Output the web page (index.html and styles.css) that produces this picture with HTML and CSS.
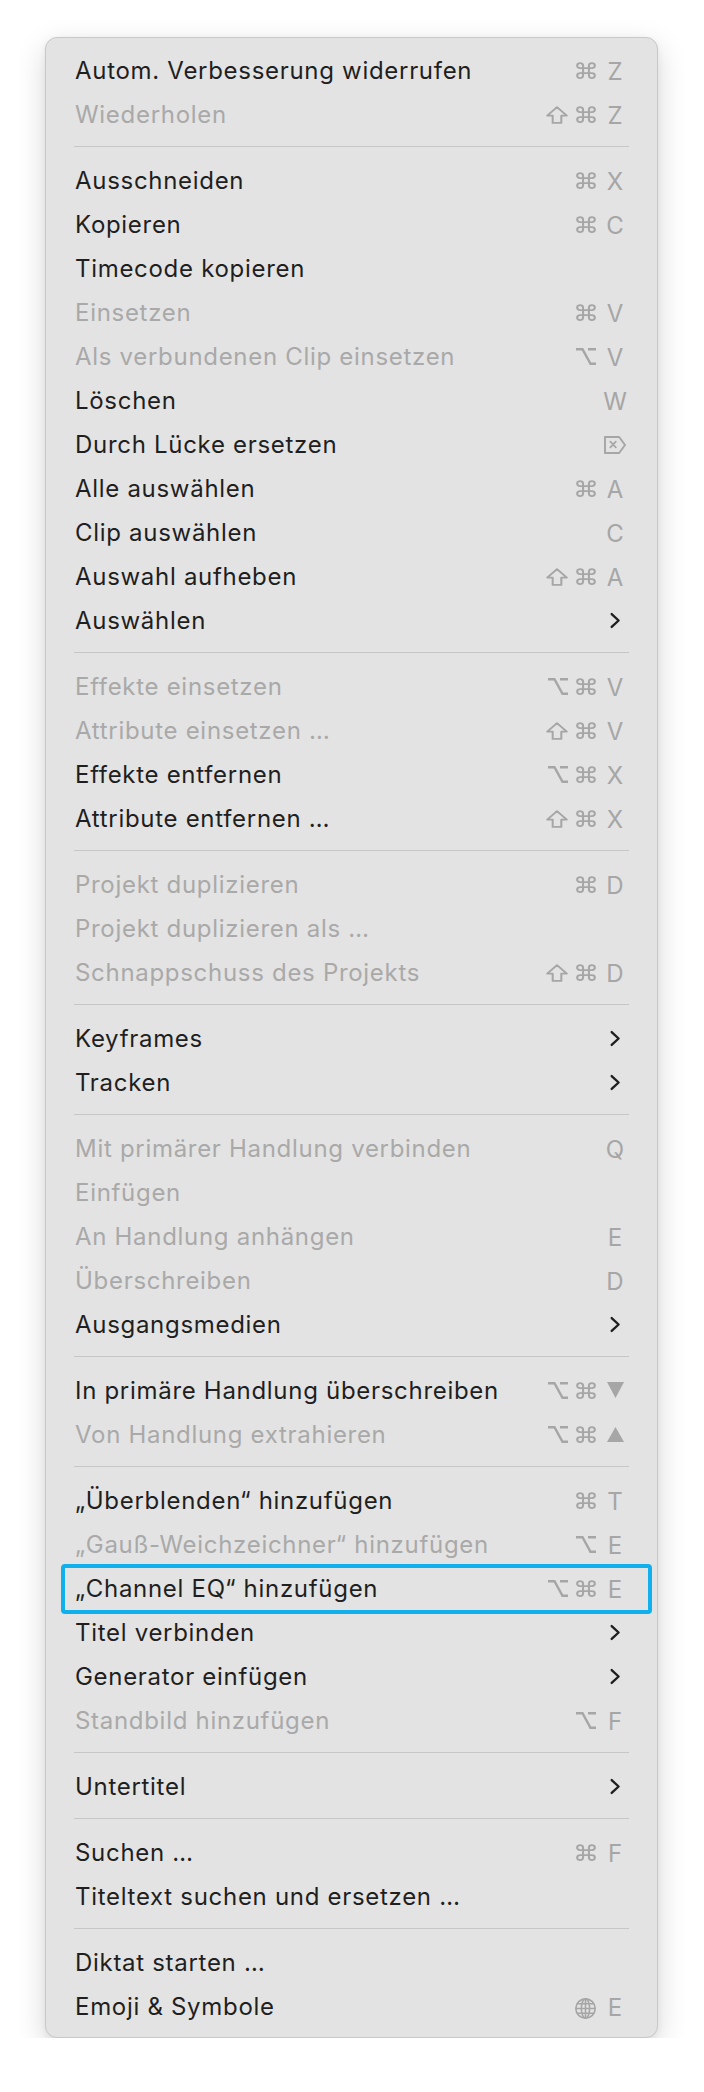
FILE: index.html
```html
<!DOCTYPE html>
<html>
<head>
    <meta charset="UTF-8">
    <link rel="stylesheet" href="styles.css">
</head>
<body>
    <!-- Symbole für Tastenkürzel -->
    <svg class="defs" width="0" height="0">
        <symbol id="cmd" viewBox="1.8 1.8 20.4 20.4" preserveAspectRatio="none"><path d="M15 6v12a3 3 0 1 0 3-3H6a3 3 0 1 0 3 3V6a3 3 0 1 0-3 3h12a3 3 0 1 0-3-3z" fill="none" stroke="currentColor" stroke-width="2.1" stroke-linejoin="round"/></symbol>
        <symbol id="shift" viewBox="1.3 2.3 21.4 19.2" preserveAspectRatio="none"><path d="M12 3.5 21.5 12.5H16.2v7.8H7.8v-7.8H2.5z" fill="none" stroke="currentColor" stroke-width="2" stroke-linejoin="round"/></symbol>
        <symbol id="opt" viewBox="2 3.2 20 17.6" preserveAspectRatio="none"><path d="M2 4.5h6.5l8 15H22M14 4.5h8" fill="none" stroke="currentColor" stroke-width="2.4"/></symbol>
        <symbol id="down" viewBox="2 4 20 17" preserveAspectRatio="none"><path d="M2 4h20L12 21z" fill="currentColor"/></symbol>
        <symbol id="up" viewBox="2 3 20 17" preserveAspectRatio="none"><path d="M12 3 22 20H2z" fill="currentColor"/></symbol>
        <symbol id="delfwd" viewBox="1 1 22.5 18" preserveAspectRatio="none"><path d="M2 2h14.5L22.5 10l-6 8H2z" fill="none" stroke="currentColor" stroke-width="2" stroke-linejoin="round"/><path d="M7.5 6.7l5.6 5.6M13.1 6.7l-5.6 5.6" stroke="currentColor" stroke-width="1.8" stroke-linecap="round"/></symbol>
        <symbol id="globe" viewBox="1 1 22 22"><g fill="none" stroke="currentColor" stroke-width="1.7"><circle cx="12" cy="12" r="10.1"/><ellipse cx="12" cy="12" rx="4.3" ry="10.1"/><path d="M12 1.9v20.2M1.9 12h20.2M3.3 7h17.4M3.3 17h17.4"/></g></symbol>
        <symbol id="chev" viewBox="0 0 12 18"><path d="M2.5 2.2 9.8 9l-7.3 6.8" fill="none" stroke="currentColor" stroke-width="2.5" stroke-linecap="round" stroke-linejoin="round"/></symbol>
    </svg>

    <div class="menu">
        <div class="item"><span class="label">Autom. Verbesserung widerrufen</span><span class="keys"><svg class="mod"><use href="#cmd"/></svg><span class="key">Z</span></span></div>
        <div class="item off"><span class="label">Wiederholen</span><span class="keys"><svg class="mod shift"><use href="#shift"/></svg><svg class="mod"><use href="#cmd"/></svg><span class="key">Z</span></span></div>
        <div class="sep"></div>

        <div class="item"><span class="label">Ausschneiden</span><span class="keys"><svg class="mod"><use href="#cmd"/></svg><span class="key">X</span></span></div>
        <div class="item"><span class="label">Kopieren</span><span class="keys"><svg class="mod"><use href="#cmd"/></svg><span class="key">C</span></span></div>
        <div class="item"><span class="label">Timecode kopieren</span></div>
        <div class="item off"><span class="label">Einsetzen</span><span class="keys"><svg class="mod"><use href="#cmd"/></svg><span class="key">V</span></span></div>
        <div class="item off"><span class="label">Als verbundenen Clip einsetzen</span><span class="keys"><svg class="mod"><use href="#opt"/></svg><span class="key">V</span></span></div>
        <div class="item"><span class="label">Löschen</span><span class="keys"><span class="key">W</span></span></div>
        <div class="item"><span class="label">Durch Lücke ersetzen</span><span class="keys"><span class="key"><svg class="del"><use href="#delfwd"/></svg></span></span></div>
        <div class="item"><span class="label">Alle auswählen</span><span class="keys"><svg class="mod"><use href="#cmd"/></svg><span class="key">A</span></span></div>
        <div class="item"><span class="label">Clip auswählen</span><span class="keys"><span class="key">C</span></span></div>
        <div class="item"><span class="label">Auswahl aufheben</span><span class="keys"><svg class="mod shift"><use href="#shift"/></svg><svg class="mod"><use href="#cmd"/></svg><span class="key">A</span></span></div>
        <div class="item"><span class="label">Auswählen</span><span class="keys"><span class="key"><svg class="chev"><use href="#chev"/></svg></span></span></div>
        <div class="sep"></div>

        <div class="item off"><span class="label">Effekte einsetzen</span><span class="keys"><svg class="mod"><use href="#opt"/></svg><svg class="mod"><use href="#cmd"/></svg><span class="key">V</span></span></div>
        <div class="item off"><span class="label">Attribute einsetzen …</span><span class="keys"><svg class="mod shift"><use href="#shift"/></svg><svg class="mod"><use href="#cmd"/></svg><span class="key">V</span></span></div>
        <div class="item"><span class="label">Effekte entfernen</span><span class="keys"><svg class="mod"><use href="#opt"/></svg><svg class="mod"><use href="#cmd"/></svg><span class="key">X</span></span></div>
        <div class="item"><span class="label">Attribute entfernen …</span><span class="keys"><svg class="mod shift"><use href="#shift"/></svg><svg class="mod"><use href="#cmd"/></svg><span class="key">X</span></span></div>
        <div class="sep"></div>

        <div class="item off"><span class="label">Projekt duplizieren</span><span class="keys"><svg class="mod"><use href="#cmd"/></svg><span class="key">D</span></span></div>
        <div class="item off"><span class="label">Projekt duplizieren als …</span></div>
        <div class="item off"><span class="label">Schnappschuss des Projekts</span><span class="keys"><svg class="mod shift"><use href="#shift"/></svg><svg class="mod"><use href="#cmd"/></svg><span class="key">D</span></span></div>
        <div class="sep"></div>

        <div class="item"><span class="label">Keyframes</span><span class="keys"><span class="key"><svg class="chev"><use href="#chev"/></svg></span></span></div>
        <div class="item"><span class="label">Tracken</span><span class="keys"><span class="key"><svg class="chev"><use href="#chev"/></svg></span></span></div>
        <div class="sep"></div>

        <div class="item off"><span class="label">Mit primärer Handlung verbinden</span><span class="keys"><span class="key">Q</span></span></div>
        <div class="item off"><span class="label">Einfügen</span></div>
        <div class="item off"><span class="label">An Handlung anhängen</span><span class="keys"><span class="key">E</span></span></div>
        <div class="item off"><span class="label">Überschreiben</span><span class="keys"><span class="key">D</span></span></div>
        <div class="item"><span class="label">Ausgangsmedien</span><span class="keys"><span class="key"><svg class="chev"><use href="#chev"/></svg></span></span></div>
        <div class="sep"></div>

        <div class="item"><span class="label">In primäre Handlung überschreiben</span><span class="keys"><svg class="mod"><use href="#opt"/></svg><svg class="mod"><use href="#cmd"/></svg><span class="key"><svg class="tri"><use href="#down"/></svg></span></span></div>
        <div class="item off"><span class="label">Von Handlung extrahieren</span><span class="keys"><svg class="mod"><use href="#opt"/></svg><svg class="mod"><use href="#cmd"/></svg><span class="key"><svg class="tri up"><use href="#up"/></svg></span></span></div>
        <div class="sep"></div>

        <div class="item"><span class="label">„Überblenden“ hinzufügen</span><span class="keys"><svg class="mod"><use href="#cmd"/></svg><span class="key">T</span></span></div>
        <div class="item off"><span class="label">„Gauß-Weichzeichner“ hinzufügen</span><span class="keys"><svg class="mod"><use href="#opt"/></svg><span class="key">E</span></span></div>
        <div class="item focus"><span class="label">„Channel EQ“ hinzufügen</span><span class="keys"><svg class="mod"><use href="#opt"/></svg><svg class="mod"><use href="#cmd"/></svg><span class="key">E</span></span></div>
        <div class="item"><span class="label">Titel verbinden</span><span class="keys"><span class="key"><svg class="chev"><use href="#chev"/></svg></span></span></div>
        <div class="item"><span class="label">Generator einfügen</span><span class="keys"><span class="key"><svg class="chev"><use href="#chev"/></svg></span></span></div>
        <div class="item off"><span class="label">Standbild hinzufügen</span><span class="keys"><svg class="mod"><use href="#opt"/></svg><span class="key">F</span></span></div>
        <div class="sep"></div>

        <div class="item"><span class="label">Untertitel</span><span class="keys"><span class="key"><svg class="chev"><use href="#chev"/></svg></span></span></div>
        <div class="sep"></div>

        <div class="item"><span class="label">Suchen …</span><span class="keys"><svg class="mod"><use href="#cmd"/></svg><span class="key">F</span></span></div>
        <div class="item"><span class="label">Titeltext suchen und ersetzen …</span></div>
        <div class="sep"></div>

        <div class="item"><span class="label">Diktat starten …</span></div>
        <div class="item"><span class="label">Emoji &amp; Symbole</span><span class="keys"><svg class="mod globe"><use href="#globe"/></svg><span class="key">E</span></span></div>
    </div>
</body>
</html>
```

FILE: styles.css
```css
body{margin: 0;padding: 37px 0 0 45px;background: #fff;
    font-family: "Inter", "Liberation Sans", sans-serif;}
.defs{position: absolute;}

.menu{
    width: 613px;box-sizing: border-box;
    padding: 10px 28px 9px 29px;
    background: #e3e3e3;
    border: 1px solid #c8c8c8;border-radius: 12px;
    box-shadow: 0 10px 30px rgba(0,0,0,.16), 0 2px 6px rgba(0,0,0,.06);
}

.item{
    height: 44px;position: relative;
    display: flex;align-items: center;
    font-size: 24px;letter-spacing: .7px;color: #1f1f1f;
}
.item .label{flex: 1;white-space: nowrap;line-height: 44px;padding-top: 2px;}
.item.off{color: #a9a9a9;}

/* Tastenkürzel */
.keys{display: flex;align-items: center;color: #a6a6a6;padding-top: 2px;margin-right: 1px;letter-spacing: 0;}
.mod{width: 20px;height: 17px;margin-left: 8px;margin-top: -1px;}
.mod.shift{width: 22px;height: 18px;}
.key{width: 26px;height: 44px;margin-left: 6px;
    display: flex;align-items: center;justify-content: center;}
.del{width: 22px;height: 18px;}
.tri{width: 17px;height: 16px;margin-top: -3px;}
.tri.up{height: 15px;margin-top: -1px;}
.globe{width: 21px;height: 21px;margin-top: 2px;}
.chev{width: 12px;height: 17px;margin-top: -2px;color: #1f1f1f;}

/* Fokusrahmen */
.item.focus::after{
    content: "";position: absolute;
    left: -14px;right: -23px;top: -2px;bottom: -4px;
    border: 4px solid #0fb0ec;border-radius: 4px;
}

.sep{height: 1px;margin: 10px 0 11px -1px;background: #c6c6c6;}
```
